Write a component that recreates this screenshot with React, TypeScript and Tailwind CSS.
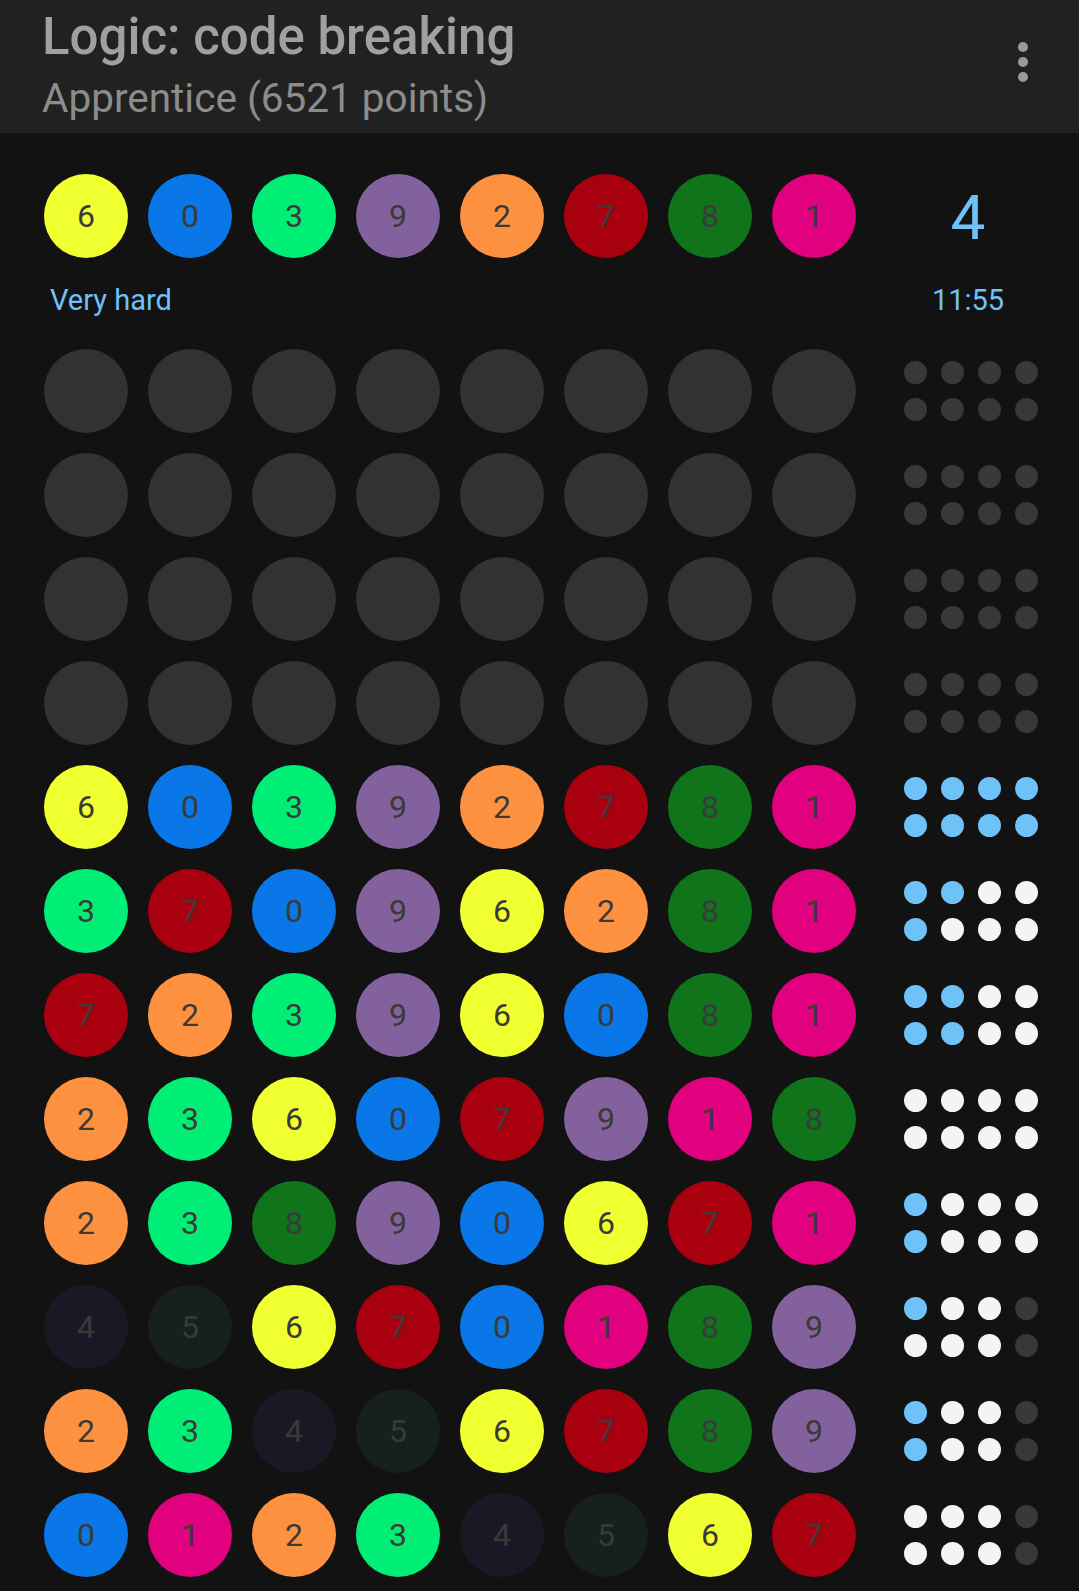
const pegColor: Record<number, string> = {
  0: 'bg-[#0a77e8]',
  1: 'bg-[#e1007d]',
  2: 'bg-[#fe9140]',
  3: 'bg-[#00ee76]',
  4: 'bg-[#1b1826]',
  5: 'bg-[#16211f]',
  6: 'bg-[#f0ff30]',
  7: 'bg-[#a9000f]',
  8: 'bg-[#0f741a]',
  9: 'bg-[#82619c]',
};

const dotColor: Record<string, string> = {
  b: 'bg-[#6ec2f7]',
  w: 'bg-[#f4f4f4]',
  d: 'bg-[#383838]',
};

const secret = [6, 0, 3, 9, 2, 7, 8, 1];

type Guess = { pegs: number[] | null; score: string };

const guesses: Guess[] = [
  { pegs: null, score: 'dddddddd' },
  { pegs: null, score: 'dddddddd' },
  { pegs: null, score: 'dddddddd' },
  { pegs: null, score: 'dddddddd' },
  { pegs: [6, 0, 3, 9, 2, 7, 8, 1], score: 'bbbbbbbb' },
  { pegs: [3, 7, 0, 9, 6, 2, 8, 1], score: 'bbwwbwww' },
  { pegs: [7, 2, 3, 9, 6, 0, 8, 1], score: 'bbwwbbww' },
  { pegs: [2, 3, 6, 0, 7, 9, 1, 8], score: 'wwwwwwww' },
  { pegs: [2, 3, 8, 9, 0, 6, 7, 1], score: 'bwwwbwww' },
  { pegs: [4, 5, 6, 7, 0, 1, 8, 9], score: 'bwwdwwwd' },
  { pegs: [2, 3, 4, 5, 6, 7, 8, 9], score: 'bwwdbwwd' },
  { pegs: [0, 1, 2, 3, 4, 5, 6, 7], score: 'wwwdwwwd' },
];

function Peg({ n }: { n: number | null }) {
  if (n === null) {
    return <div className="w-[84px] h-[84px] rounded-full bg-[#323232] shrink-0" />;
  }
  return (
    <div
      className={`w-[84px] h-[84px] rounded-full shrink-0 flex items-center justify-center text-[32px] leading-none text-[#3a3a3a] ${pegColor[n]}`}
    >
      {n}
    </div>
  );
}

function Score({ score }: { score: string }) {
  return (
    <div className="ml-[48px] grid grid-cols-4 gap-[14px]">
      {score.split('').map((c, i) => (
        <div key={i} className={`w-[23px] h-[23px] rounded-full ${dotColor[c]}`} />
      ))}
    </div>
  );
}

export default function App() {
  return (
    <div className="w-[1079px] h-[1591px] bg-[#121212] font-['Roboto',sans-serif] flex flex-col">
      <div className="h-[133px] bg-[#212121] flex justify-between pl-[42px] pr-[51px] shrink-0">
        <div className="pt-[11px]">
          <div className="text-[51px] leading-[52px] font-medium text-[#a0a0a0]">Logic: code breaking</div>
          <div className="mt-[15px] text-[40.5px] leading-[41px] text-[#8c8c8c]">Apprentice (6521 points)</div>
        </div>
        <div className="pt-[42px] flex flex-col gap-[5px]">
          <div className="w-[10px] h-[10px] rounded-full bg-[#9a9a9a]" />
          <div className="w-[10px] h-[10px] rounded-full bg-[#9a9a9a]" />
          <div className="w-[10px] h-[10px] rounded-full bg-[#9a9a9a]" />
        </div>
      </div>

      <div className="pt-[41px] pl-[44px]">
        <div className="flex items-center">
          <div className="flex gap-[20px]">
            {secret.map((n, i) => (
              <Peg key={i} n={n} />
            ))}
          </div>
          <div className="ml-[45px] w-[134px] pt-[4px] text-center text-[62px] leading-none text-[#6ec2f7]">4</div>
        </div>
        <div className="mt-[25px] flex items-center text-[29px] leading-[34px] text-[#6ec2f7]">
          <div className="pl-[6px] w-[812px]">Very hard</div>
          <div className="ml-[45px] w-[134px] text-center">11:55</div>
        </div>

        <div className="mt-[32px] flex flex-col gap-[20px]">
          {guesses.map((g, r) => (
            <div key={r} className="flex items-center">
              <div className="flex gap-[20px]">
                {(g.pegs ?? Array(8).fill(null)).map((n, i) => (
                  <Peg key={i} n={n} />
                ))}
              </div>
              <Score score={g.score} />
            </div>
          ))}
        </div>
      </div>
    </div>
  );
}
